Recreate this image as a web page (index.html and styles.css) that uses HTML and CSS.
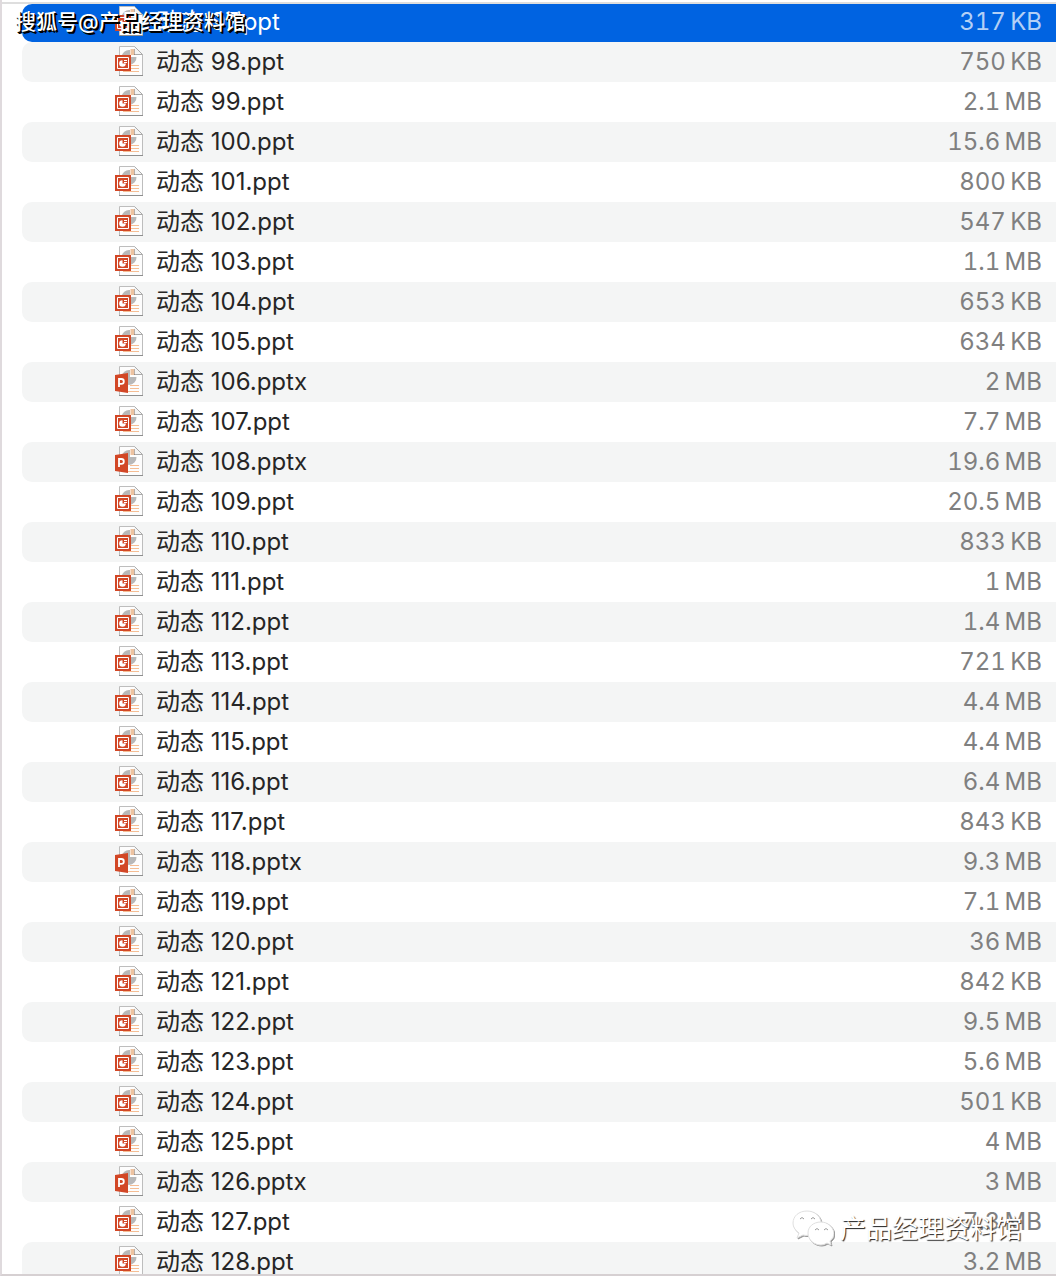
FILE: index.html
```html
<!DOCTYPE html>
<html lang="zh-CN">
<head>
<meta charset="utf-8">
<meta name="viewport" content="width=device-width, initial-scale=1">
<title>动态 PPT</title>
<link rel="stylesheet" href="styles.css">
</head>
<body>
<svg class="sprite" aria-hidden="true">
  <symbol id="page" viewBox="0 0 30 32">
    <path d="M5.500 1.500H20.500L28.500 9.500V30.500H5.500Z" fill="#fdfdfd" stroke="#bdbdbd"/>
    <path d="M5 30.500H29" stroke="#8e8e8e"/>
    <path d="M16 5A7.500 7.500 0 1 0 22.500 12H16Z" fill="#b8b8b8"/>
    <path d="M16.500 4H20V10H16.500Z" fill="#eec3a0"/>
    <path d="M20 4H21V9H23V10H20Z" fill="#7d6a5c"/>
    <path d="M20.500 1.500V9.500H28.500Z" fill="#f4f4f4"/>
    <path d="M20.500 1.500L28.500 9.500H22" fill="none" stroke="#aaa"/>
    <path d="M16 20.500H25M16 23.500H25M9 26.500H25" stroke="#f5bd93"/>
  </symbol>
  <symbol id="ppt" viewBox="0 0 30 32">
    <use href="#page"/>
    <path d="M1 10H17V26H1Z" fill="#d24726"/>
    <path d="M3.500 12.500H14.500V23.500H3.500Z" fill="none" stroke="#fff"/>
    <circle cx="8.500" cy="18.500" r="3.300" fill="#fff"/>
    <path d="M8.500 14H13V18.500H8.500Z" fill="#d24726"/>
    <path d="M10 15.500H13M10 17.500H13" stroke="#fff"/>
  </symbol>
  <symbol id="pptx" viewBox="0 0 30 32">
    <use href="#page"/>
    <path d="M1 10L14 8V28L1 26Z" fill="#d24726"/>
    <path d="M5 22V14H7.400A2.300 2.300 0 0 1 7.400 18.800H5" fill="none" stroke="#fff" stroke-width="1.800"/>
  </symbol>
</svg>
<main class="window">
  <table class="files">
    <tbody>
      <tr class="selected"><td class="name"><svg class="icon"><use href="#ppt"/></svg>动态 97.ppt</td><td class="size">317&#8201;KB</td></tr>
      <tr><td class="name"><svg class="icon"><use href="#ppt"/></svg>动态 98.ppt</td><td class="size">750&#8201;KB</td></tr>
      <tr><td class="name"><svg class="icon"><use href="#ppt"/></svg>动态 99.ppt</td><td class="size">2.1&#8201;MB</td></tr>
      <tr><td class="name"><svg class="icon"><use href="#ppt"/></svg>动态 100.ppt</td><td class="size">15.6&#8201;MB</td></tr>
      <tr><td class="name"><svg class="icon"><use href="#ppt"/></svg>动态 101.ppt</td><td class="size">800&#8201;KB</td></tr>
      <tr><td class="name"><svg class="icon"><use href="#ppt"/></svg>动态 102.ppt</td><td class="size">547&#8201;KB</td></tr>
      <tr><td class="name"><svg class="icon"><use href="#ppt"/></svg>动态 103.ppt</td><td class="size">1.1&#8201;MB</td></tr>
      <tr><td class="name"><svg class="icon"><use href="#ppt"/></svg>动态 104.ppt</td><td class="size">653&#8201;KB</td></tr>
      <tr><td class="name"><svg class="icon"><use href="#ppt"/></svg>动态 105.ppt</td><td class="size">634&#8201;KB</td></tr>
      <tr><td class="name"><svg class="icon"><use href="#pptx"/></svg>动态 106.pptx</td><td class="size">2&#8201;MB</td></tr>
      <tr><td class="name"><svg class="icon"><use href="#ppt"/></svg>动态 107.ppt</td><td class="size">7.7&#8201;MB</td></tr>
      <tr><td class="name"><svg class="icon"><use href="#pptx"/></svg>动态 108.pptx</td><td class="size">19.6&#8201;MB</td></tr>
      <tr><td class="name"><svg class="icon"><use href="#ppt"/></svg>动态 109.ppt</td><td class="size">20.5&#8201;MB</td></tr>
      <tr><td class="name"><svg class="icon"><use href="#ppt"/></svg>动态 110.ppt</td><td class="size">833&#8201;KB</td></tr>
      <tr><td class="name"><svg class="icon"><use href="#ppt"/></svg>动态 111.ppt</td><td class="size">1&#8201;MB</td></tr>
      <tr><td class="name"><svg class="icon"><use href="#ppt"/></svg>动态 112.ppt</td><td class="size">1.4&#8201;MB</td></tr>
      <tr><td class="name"><svg class="icon"><use href="#ppt"/></svg>动态 113.ppt</td><td class="size">721&#8201;KB</td></tr>
      <tr><td class="name"><svg class="icon"><use href="#ppt"/></svg>动态 114.ppt</td><td class="size">4.4&#8201;MB</td></tr>
      <tr><td class="name"><svg class="icon"><use href="#ppt"/></svg>动态 115.ppt</td><td class="size">4.4&#8201;MB</td></tr>
      <tr><td class="name"><svg class="icon"><use href="#ppt"/></svg>动态 116.ppt</td><td class="size">6.4&#8201;MB</td></tr>
      <tr><td class="name"><svg class="icon"><use href="#ppt"/></svg>动态 117.ppt</td><td class="size">843&#8201;KB</td></tr>
      <tr><td class="name"><svg class="icon"><use href="#pptx"/></svg>动态 118.pptx</td><td class="size">9.3&#8201;MB</td></tr>
      <tr><td class="name"><svg class="icon"><use href="#ppt"/></svg>动态 119.ppt</td><td class="size">7.1&#8201;MB</td></tr>
      <tr><td class="name"><svg class="icon"><use href="#ppt"/></svg>动态 120.ppt</td><td class="size">36&#8201;MB</td></tr>
      <tr><td class="name"><svg class="icon"><use href="#ppt"/></svg>动态 121.ppt</td><td class="size">842&#8201;KB</td></tr>
      <tr><td class="name"><svg class="icon"><use href="#ppt"/></svg>动态 122.ppt</td><td class="size">9.5&#8201;MB</td></tr>
      <tr><td class="name"><svg class="icon"><use href="#ppt"/></svg>动态 123.ppt</td><td class="size">5.6&#8201;MB</td></tr>
      <tr><td class="name"><svg class="icon"><use href="#ppt"/></svg>动态 124.ppt</td><td class="size">501&#8201;KB</td></tr>
      <tr><td class="name"><svg class="icon"><use href="#ppt"/></svg>动态 125.ppt</td><td class="size">4&#8201;MB</td></tr>
      <tr><td class="name"><svg class="icon"><use href="#pptx"/></svg>动态 126.pptx</td><td class="size">3&#8201;MB</td></tr>
      <tr><td class="name"><svg class="icon"><use href="#ppt"/></svg>动态 127.ppt</td><td class="size">7.3&#8201;MB</td></tr>
      <tr><td class="name"><svg class="icon"><use href="#ppt"/></svg>动态 128.ppt</td><td class="size">3.2&#8201;MB</td></tr>
    </tbody>
  </table>
  <div class="mark mark-top">搜狐号@产品经理资料馆</div>
  <div class="mark mark-bottom">
    <svg class="wechat" viewBox="0 0 42 36" aria-hidden="true">
      <path d="M15 1C7 1 1 6 1 13C1 17 3 20 7 23L5 28L11 25Q14 26 17 25C29 25 30 16 29 12C28 5 22 1 15 1Z"/>
      <path d="M29 12C21 12 16 17 16 23C16 30 22 35 29 35Q32 35 35 33L39 35L38 31Q42 28 42 23C41 17 36 12 29 12Z"/>
      <path class="eyes" d="M8 9Q10 6 12 9M19 9Q21 6 23 9M23 20Q25 17 27 20M32 20Q34 17 36 20"/>
    </svg>
    <span>产品经理资料馆</span>
  </div>
</main>
</body>
</html>
```
FILE: styles.css
```css
* {
  box-sizing: border-box;
}

body {
  margin: 0;
  background: #fff;
  color: #262626;
  font-family: Inter, "Noto Sans CJK SC", sans-serif;
  font-size: 24px;
  line-height: 40px;
}

.sprite {
  position: absolute;
  width: 0;
  height: 0;
}

.window {
  position: relative;
  height: 100vh;
  padding-top: 2px;
  border-bottom: 2px solid #d6d0d2;
  border-left: 2px solid #dfdadd;
  overflow: hidden;
}

.files {
  width: 100%;
  padding-left: 20px;
  border-top: 2px solid #dedede;
  border-spacing: 0;
}

.files td {
  height: 40px;
  padding: 0;
  white-space: nowrap;
}

.files .name {
  padding-left: 92px;
  border-radius: 10px 0 0 10px;
}

.files .size {
  padding-right: 14px;
  color: #808080;
  font-variant-numeric: tabular-nums;
  text-align: right;
}

.files tr:nth-child(even) td {
  background: #f4f5f5;
}

.files .selected td {
  height: 38px;
  background: #0063e1;
  color: #fff;
  line-height: 36px;
  padding-bottom: 2px;
}

.files .selected .size {
  color: #b3d0f6;
}

.icon {
  width: 30px;
  height: 32px;
  margin: -2px 12px 2px 0;
  vertical-align: middle;
}

.mark {
  position: absolute;
  color: #fff;
  white-space: nowrap;
}

.mark-top {
  top: 2px;
  left: 13px;
  font-size: 21px;
  font-weight: 500;
  text-shadow: 1px 1px #000, 2px 2px #000;
}

.mark-bottom {
  right: 34px;
  bottom: 25px;
  display: flex;
  align-items: center;
  gap: 6px;
  font-size: 26px;
  text-shadow: 1px 1px 1px #222;
}

.wechat {
  width: 42px;
  height: 36px;
  margin-bottom: 2px;
  fill: #fff;
  stroke: #e0e0e0;
  filter: drop-shadow(1px 1px 0 #999);
}

.wechat .eyes {
  fill: none;
  stroke: #999;
}
```
